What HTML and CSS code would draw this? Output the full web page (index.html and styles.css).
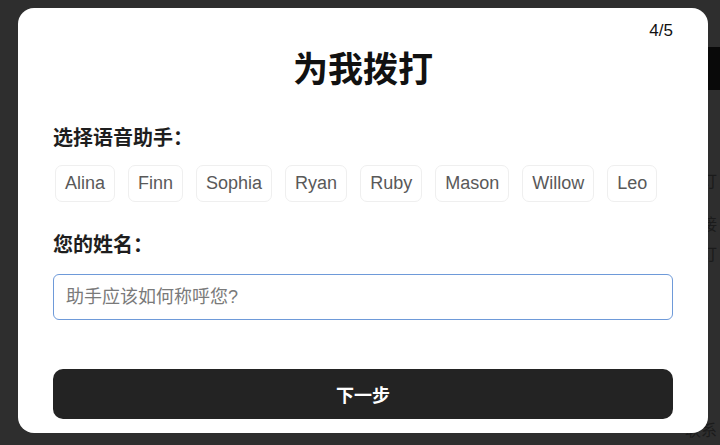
FILE: index.html
```html
<!DOCTYPE html>
<html lang="zh">
<head>
<meta charset="utf-8">
<title>为我拨打</title>
<link rel="stylesheet" href="styles.css">
</head>
<body>
<div class="page">
  <div class="page-header"></div>
  <div class="page-body">
    <p class="bg-line l1">在线预订</p>
    <p class="bg-line l2">或直接</p>
    <p class="bg-line l3">电话预订</p>
    <p class="bg-line l4">联系</p>
  </div>
</div>
<div class="overlay">
  <div class="modal">
    <span class="step">4/5</span>
    <h1 class="title">为我拨打</h1>
    <div class="field">
      <div class="label">选择语音助手：</div>
      <div class="chips">
        <span class="chip">Alina</span>
        <span class="chip">Finn</span>
        <span class="chip">Sophia</span>
        <span class="chip">Ryan</span>
        <span class="chip">Ruby</span>
        <span class="chip">Mason</span>
        <span class="chip">Willow</span>
        <span class="chip">Leo</span>
      </div>
    </div>
    <div class="field field-name">
      <div class="label">您的姓名：</div>
      <input class="name-input" type="text" placeholder="助手应该如何称呼您?">
    </div>
    <button class="next-btn" type="button">下一步</button>
  </div>
</div>
</body>
</html>
```

FILE: styles.css
```css
html, body {
  margin: 0;
  padding: 0;
  height: 100%;
}
body {
  background: #2e2e2e;
  font-family: "Liberation Sans", "Noto Sans CJK SC", sans-serif;
  overflow: hidden;
}
.page {
  padding-top: 47px;
}
.page-header {
  height: 43px;
  margin-left: 640px;
  background: #090909;
}
.page-body {
  padding-right: 3px;
  text-align: right;
  font-family: "Noto Sans CJK SC", sans-serif;
  font-size: 16px;
  color: #1b1b1b;
}
.bg-line {
  margin: 0;
  line-height: 20px;
}
.l1 { margin-top: 80px; }
.l2 { margin-top: 23px; }
.l3 { margin-top: 10px; }
.l4 { margin-top: 156px; }

.overlay {
  position: fixed;
  inset: 0;
  padding: 8px 12px 0 18px;
}
.modal {
  position: relative;
  box-sizing: border-box;
  width: 690px;
  height: 425px;
  background: #ffffff;
  border-radius: 16px;
  padding: 38px 35px 14px;
  display: flex;
  flex-direction: column;
}
.step {
  position: absolute;
  top: 13px;
  right: 35px;
  font-size: 17px;
  line-height: 20px;
  color: #111;
}
.title {
  margin: 0;
  text-align: center;
  font-family: "Noto Sans CJK SC", sans-serif;
  font-size: 35px;
  line-height: 42px;
  font-weight: 700;
  color: #111;
}
.field {
  margin-top: 36px;
}
.field-name {
  margin-top: 29px;
}
.label {
  font-family: "Noto Sans CJK SC", sans-serif;
  font-size: 20px;
  line-height: 26px;
  font-weight: 700;
  color: #1e1e1e;
}
.chips {
  margin-top: 15px;
  margin-left: 2px;
  display: flex;
  flex-wrap: wrap;
  gap: 13px;
}
.chip {
  box-sizing: border-box;
  height: 37px;
  display: flex;
  align-items: center;
  padding: 0 9px;
  border: 1px solid #efefef;
  border-radius: 7px;
  font-size: 18px;
  color: #595959;
}
.name-input {
  display: block;
  box-sizing: border-box;
  width: 100%;
  height: 46px;
  margin-top: 17px;
  padding: 0 12px;
  border: 1px solid #6e9ad9;
  border-radius: 6px;
  outline: none;
  font-family: "Liberation Sans", "Noto Sans CJK SC", sans-serif;
  font-size: 18px;
  color: #222;
}
.name-input::placeholder {
  color: #7a7a7a;
}
.next-btn {
  margin-top: auto;
  width: 100%;
  height: 50px;
  border: none;
  border-radius: 10px;
  background: #232323;
  color: #fff;
  font-family: "Noto Sans CJK SC", sans-serif;
  font-size: 18px;
  font-weight: 700;
}
```
